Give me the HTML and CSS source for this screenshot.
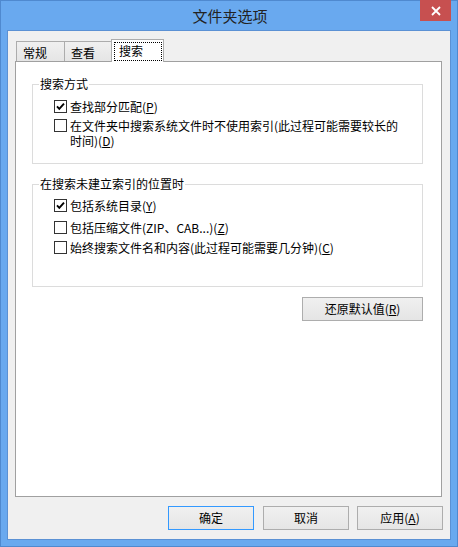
FILE: index.html
```html
<!DOCTYPE html>
<html lang="zh-CN">
<head>
<meta charset="utf-8">
<title>文件夹选项</title>
<link rel="stylesheet" href="styles.css">
</head>
<body>
<div class="window">
  <div class="titlebar">
    <span class="title">文件夹选项</span>
    <div class="close">
      <svg width="10" height="10" viewBox="0 0 10 10"><path d="M1 1 L9 9 M9 1 L1 9" stroke="#fff" stroke-width="1.8" fill="none"/></svg>
    </div>
  </div>
  <div class="client">
    <div class="tabs">
      <div class="tab t1">常规</div>
      <div class="tab t2">查看</div>
      <div class="tab active"><span class="focus">搜索</span></div>
    </div>
    <div class="panel">
      <div class="group g1">
        <span class="gtitle">搜索方式</span>
        <div class="opt o1">
          <span class="cb"><svg width="13" height="13" viewBox="0 0 13 13"><rect x="0.5" y="0.5" width="12" height="12" fill="#fff" stroke="#333"/><path d="M3 6.3 L5.3 8.8 L10 3.6" stroke="#000" stroke-width="1.9" fill="none"/></svg></span>
          <span class="lbl">查找部分匹配(<u>P</u>)</span>
        </div>
        <div class="opt o2">
          <span class="cb"><svg width="13" height="13" viewBox="0 0 13 13"><rect x="0.5" y="0.5" width="12" height="12" fill="#fff" stroke="#333"/></svg></span>
          <span class="lbl wrap">在文件夹中搜索系统文件时不使用索引(此过程可能需要较长的时间)(<u>D</u>)</span>
        </div>
      </div>
      <div class="group g2">
        <span class="gtitle">在搜索未建立索引的位置时</span>
        <div class="opt p1">
          <span class="cb"><svg width="13" height="13" viewBox="0 0 13 13"><rect x="0.5" y="0.5" width="12" height="12" fill="#fff" stroke="#333"/><path d="M3 6.3 L5.3 8.8 L10 3.6" stroke="#000" stroke-width="1.9" fill="none"/></svg></span>
          <span class="lbl">包括系统目录(<u>Y</u>)</span>
        </div>
        <div class="opt p2">
          <span class="cb"><svg width="13" height="13" viewBox="0 0 13 13"><rect x="0.5" y="0.5" width="12" height="12" fill="#fff" stroke="#333"/></svg></span>
          <span class="lbl">包括压缩文件(ZIP、CAB...)(<u>Z</u>)</span>
        </div>
        <div class="opt p3">
          <span class="cb"><svg width="13" height="13" viewBox="0 0 13 13"><rect x="0.5" y="0.5" width="12" height="12" fill="#fff" stroke="#333"/></svg></span>
          <span class="lbl">始终搜索文件名和内容(此过程可能需要几分钟)(<u>C</u>)</span>
        </div>
      </div>
      <div class="restore-row">
        <button class="btn restore">还原默认值(<u>R</u>)</button>
      </div>
    </div>
    <div class="footer">
      <button class="btn default b-ok">确定</button>
      <button class="btn b-cancel">取消</button>
      <button class="btn">应用(<u>A</u>)</button>
    </div>
  </div>
</div>
</body>
</html>
```
FILE: styles.css
```css
* { box-sizing: border-box; }
html, body { margin: 0; padding: 0; }
body {
  font-family: "Noto Sans CJK SC", "Noto Sans", sans-serif;
  font-size: 12px;
  color: #000;
  background: #69a9ef;
}
.window {
  width: 458px;
  height: 547px;
  border: 1px solid #4f89cf;
  background: #69a9ef;
  padding: 0 6px 6px 6px;
  display: flex;
  flex-direction: column;
  position: relative;
}
.titlebar {
  height: 29px;
  display: flex;
  align-items: center;
  justify-content: center;
}
.title {
  font-size: 15px;
  line-height: 20px;
  color: #222;
  margin-top: 1px;
  margin-left: 2px;
}
.close {
  position: absolute;
  top: -1px;
  right: 6px;
  width: 31px;
  height: 21px;
  background: #c75050;
  display: flex;
  align-items: center;
  justify-content: center;
}
.close svg { display: block; }
.client {
  flex: 1;
  border: 1px solid #5b91d4;
  background: #f0f0f0;
  display: flex;
  flex-direction: column;
}
.tabs {
  display: flex;
  align-items: flex-end;
  margin-top: 8px;
  padding-left: 8px;
  height: 22px;
}
.tab {
  height: 20px;
  border: 1px solid #acacac;
  border-bottom: none;
  border-right: none;
  background: linear-gradient(#f0f0f0, #e5e5e5);
  padding-left: 6px;
  line-height: 20px;
  padding-top: 1px;
}
.t1 { width: 48px; }
.t2 { width: 47px; }
.tab.active {
  width: 53px;
  height: 23px;
  margin-bottom: -1px;
  background: #fff;
  border-right: 1px solid #acacac;
  position: relative;
  z-index: 1;
  padding: 2px 0 0 2px;
}
.focus {
  display: block;
  width: 48px;
  height: 19px;
  border: 1px dotted #000;
  padding-left: 4px;
  line-height: 16px;
}
.panel {
  margin-left: 7px;
  width: 427px;
  height: 436px;
  border: 1px solid #a0a0a0;
  background: #fff;
  display: flex;
  flex-direction: column;
}
.group {
  border: 1px solid #dcdcdc;
  margin: 0 18px 0 16px;
  padding: 0 17px 0 21px;
  line-height: 15px;
}
.g1 { margin-top: 22px; padding-bottom: 15px; }
.g2 { margin-top: 20px; padding-bottom: 31px; }
.gtitle {
  display: block;
  width: max-content;
  margin: -9px 0 0 -15px;
  padding: 0 1px;
  line-height: 16px;
  background: #fff;
}
.opt {
  display: flex;
  align-items: flex-start;
}
.cb {
  width: 13px;
  height: 13px;
  margin-top: 1px;
  margin-right: 3px;
  flex: none;
}
.cb svg { display: block; }
.lbl { line-height: 15px; }
.wrap { width: 334px; }
.o1 { margin-top: 7px; }
.o2 { margin-top: 4px; }
.p1 { margin-top: 6px; }
.p2 { margin-top: 7px; }
.p3 { margin-top: 5px; }
.restore-row {
  display: flex;
  justify-content: flex-end;
  margin: 10px 18px 0 0;
}
.btn {
  font-family: "Noto Sans CJK SC", "Noto Sans", sans-serif;
  font-size: 12px;
  color: #000;
  height: 24px;
  width: 86px;
  border: 1px solid #adadad;
  background: linear-gradient(#f0f0f0, #e5e5e5);
  padding: 0;
  margin: 0;
  line-height: 20px;
}
.restore { width: 121px; }
.btn.default { border-color: #3399ff; }
.footer {
  display: flex;
  justify-content: flex-end;
  margin-top: 9px;
  padding-right: 7px;
}
.b-ok { margin-right: 9px; }
.b-cancel { margin-right: 8px; }
```
